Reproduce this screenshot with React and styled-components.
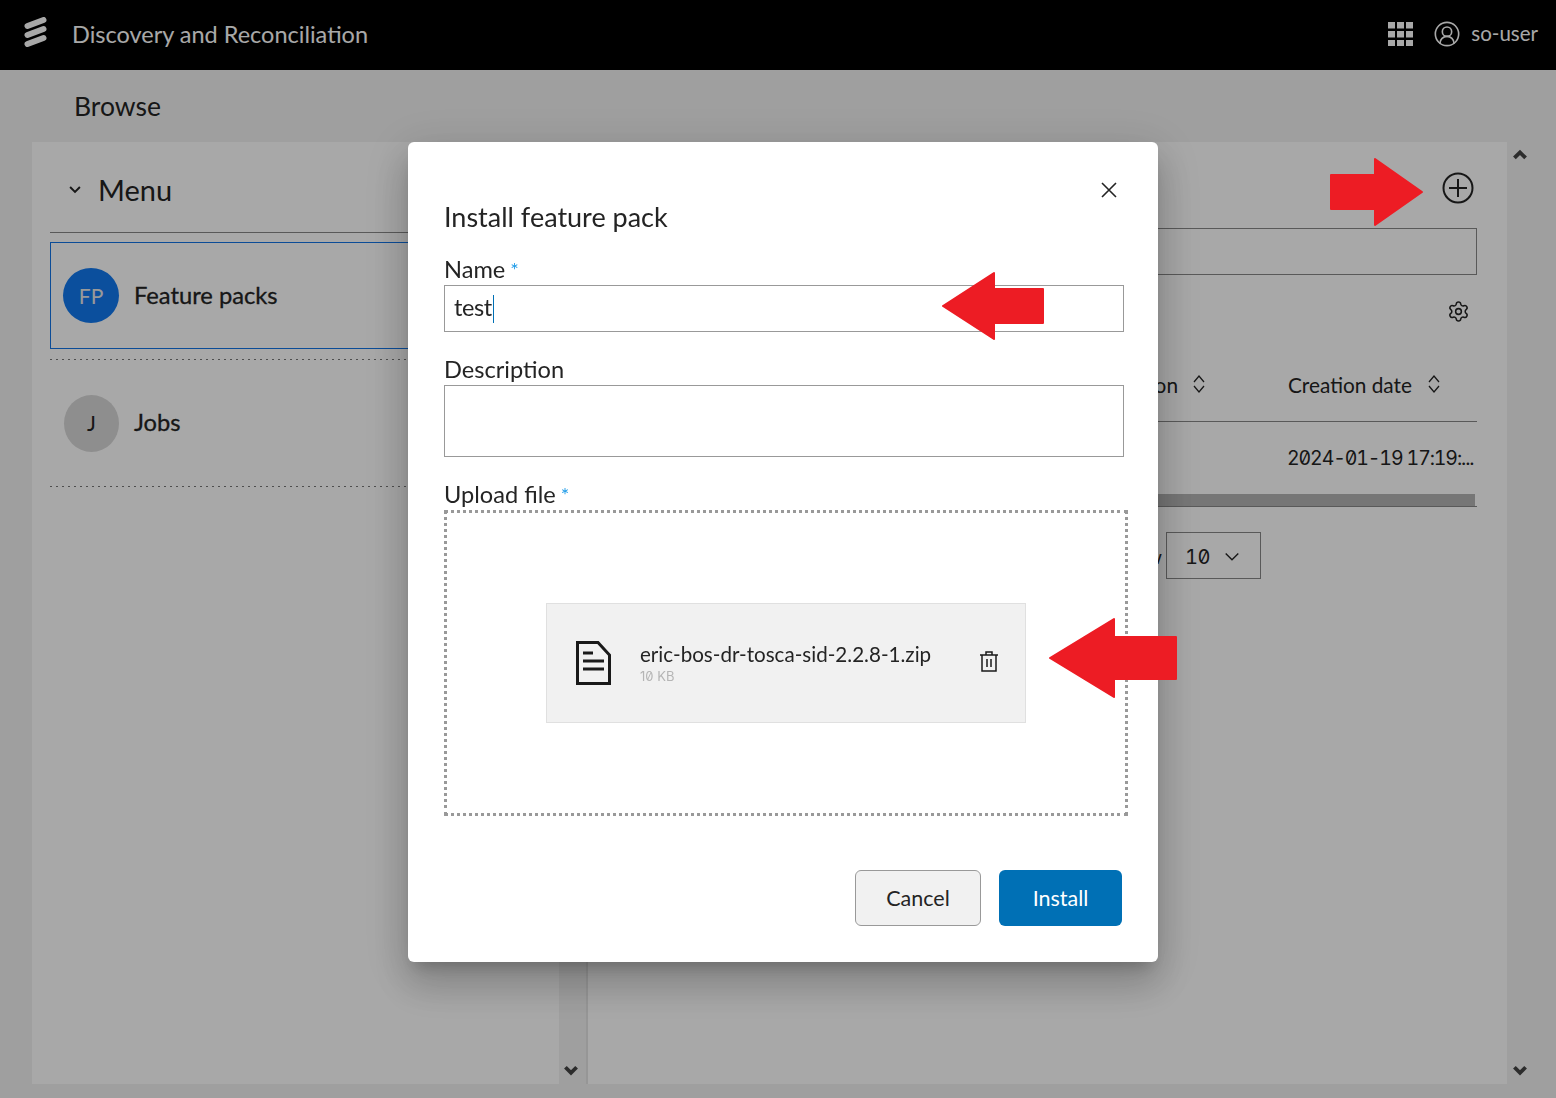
import React from 'react';
import styled, { createGlobalStyle } from 'styled-components';
import { Settings, CircleUserRound } from 'lucide-react';

const GlobalStyle = createGlobalStyle`
	html, body {
		margin: 0;
		height: 100%;
		overflow: hidden;
	}
	body {
		background: #f2f2f2;
		color: #242424;
		font-family: Lato, "Open Sans", sans-serif;
	}
	* {
		box-sizing: border-box;
	}
`;

const Page = styled.div`
	display: flex;
	flex-direction: column;
	height: 1098px;
`;

const TopBar = styled.header`
	display: flex;
	align-items: center;
	height: 70px;
	padding: 0 18px 3px 24px;
	background: #000;
	color: #fff;
	flex-shrink: 0;
`;

const LogoSvg = styled.svg`
	width: 23px;
	height: 30px;
	margin: 0 25px 3px 0;
`;

const AppName = styled.div`
	font-size: 23.5px;
	flex: 1;
`;

const UserName = styled.div`
	font-size: 20.5px;
	margin: 0 0 2px 10px;
`;

const GridSvg = styled.svg`
	width: 25px;
	height: 24px;
	margin-right: 20px;
`;

const PageTitle = styled.div`
	height: 72px;
	padding-left: 74px;
	display: flex;
	align-items: center;
	font-size: 26.5px;
	flex-shrink: 0;
`;

const Workspace = styled.div`
	flex: 1;
	display: flex;
	margin: 0 23px 14px 32px;
	min-height: 0;
`;

const SidePanel = styled.aside`
	width: 527px;
	background: #fff;
	padding: 0 18px;
`;

const MenuHead = styled.div`
	display: flex;
	align-items: center;
	gap: 16px;
	height: 91px;
	padding: 5px 0 0 18px;
	border-bottom: 1px solid #888;
	font-size: 29px;
`;

const MenuItem = styled.div`
	display: flex;
	align-items: center;
	gap: 15px;
	padding-left: ${(props) => (props.$selected ? '12px' : '14px')};
	height: ${(props) => (props.$selected ? '107px' : '126px')};
	margin-top: ${(props) => (props.$selected ? '9px' : '0')};
	border: ${(props) => (props.$selected ? '1px solid #1174e6' : 'none')};
	font-size: 23.7px;
	line-height: 26px;
	-webkit-text-stroke: 0.3px #242424;
`;

const ItemLabel = styled.span`
	margin-bottom: 2px;
`;

const Dots = styled.div`
	height: 1px;
	background-image: repeating-linear-gradient(to right, #777 0 2px, transparent 2px 6px);
	margin-top: ${(props) => props.$gap || 0}px;
`;

const Avatar = styled.div`
	width: ${(props) => (props.$selected ? '56px' : '55px')};
	height: ${(props) => (props.$selected ? '55px' : '57px')};
	border-radius: 50%;
	display: flex;
	align-items: center;
	justify-content: center;
	font-size: 21px;
	-webkit-text-stroke: 0;
	background: ${(props) => (props.$selected ? '#1279ef' : '#d8d8d8')};
	color: ${(props) => (props.$selected ? '#e8e8e8' : '#242424')};
`;

const ScrollTrack = styled.div`
	width: ${(props) => props.$w}px;
	display: flex;
	flex-direction: column;
	justify-content: space-between;
	align-items: center;
	padding: 7px ${(props) => props.$nudge || 0}px 8px 0;
	flex-shrink: 0;
`;

const Divider = styled.div`
	width: 2px;
	background: #e4e4e4;
	flex-shrink: 0;
`;

const MainPanel = styled.main`
	flex: 1;
	background: #fff;
	padding: 0 30px 0 40px;
`;

const Toolbar = styled.div`
	height: 86px;
	display: flex;
	justify-content: flex-end;
	align-items: flex-start;
	padding: 30px 3px 0 0;
`;

const SearchBox = styled.div`
	height: 47px;
	border: 1px solid #888;
`;

const GearRow = styled.div`
	height: 72px;
	display: flex;
	justify-content: flex-end;
	align-items: center;
	padding: 0 7px 0 0;
	color: #242424;
`;

const TableRow = styled.div`
	display: grid;
	grid-template-columns: 1fr 189px;
	align-items: center;
	height: ${(props) => (props.$head ? '75px' : '72px')};
	border-bottom: ${(props) => (props.$head ? '1px solid #888' : 'none')};
	font-size: 20.8px;
`;

const HeadCell = styled.div`
	display: flex;
	align-items: center;
	justify-content: ${(props) => (props.$end ? 'flex-end' : 'flex-start')};
	gap: ${(props) => (props.$end ? '14px' : '15px')};
	padding-right: ${(props) => (props.$end ? '82px' : '0')};
	white-space: nowrap;
`;

const DateCell = styled.div`
	margin-left: -1px;
	font-family: Inter, sans-serif;
	font-feature-settings: 'zero', 'tnum';
	font-size: 19.5px;
	letter-spacing: -1.1px;
	white-space: nowrap;
`;

const HScroll = styled.div`
	height: 13px;
	border-bottom: 1px solid #888;
	background: linear-gradient(to right, #b4b4b4 calc(100% - 2px), transparent calc(100% - 2px));
`;

const Pager = styled.div`
	display: flex;
	justify-content: flex-end;
	align-items: center;
	gap: 4px;
	margin: 25px 216px 0 0;
	font-size: 20px;
`;

const SizeSelect = styled.div`
	width: 95px;
	height: 47px;
	border: 1px solid #888;
	display: flex;
	align-items: center;
	gap: 13px;
	padding: 3px 0 0 18px;
	font-family: Inter, sans-serif;
	font-feature-settings: 'zero', 'tnum';
	font-size: 20px;
	letter-spacing: -0.5px;
`;

const Mask = styled.div`
	position: fixed;
	inset: 0;
	background: rgba(0, 0, 0, 0.34);
	padding: 142px 0 0 408px;
`;

const Modal = styled.div`
	position: relative;
	width: 750px;
	height: 820px;
	background: #fff;
	border-radius: 6px;
	padding: 60px 34px 0 36px;
	color: #242424;
	box-shadow: 0 24px 38px 3px rgba(0, 0, 0, 0.14), 0 9px 46px 8px rgba(0, 0, 0, 0.12), 0 11px 15px -7px rgba(0, 0, 0, 0.2);
`;

const CloseSvg = styled.svg`
	position: absolute;
	top: 40px;
	right: 41px;
	width: 16px;
	height: 16px;
`;

const ModalTitle = styled.div`
	font-size: 27px;
	line-height: 30px;
	margin-bottom: 23px;
`;

const Label = styled.div`
	font-size: 23.6px;
	line-height: 28px;
	margin-top: ${(props) => props.$top || 0}px;
	height: 30px;
`;

const Star = styled.span`
	color: #1e9be8;
	font-size: 20px;
	margin-left: 5px;
	vertical-align: 1px;
`;

const TextBox = styled.div`
	height: ${(props) => props.$h}px;
	border: 1px solid #999;
	padding: 0 0 3px 9px;
	display: flex;
	align-items: center;
	font-size: 23.5px;
	letter-spacing: -0.4px;
`;

const Caret = styled.span`
	width: 1px;
	height: 28px;
	margin: 3px 0 0 1px;
	background: #0070b5;
`;

const DropZone = styled.div`
	width: 684px;
	height: 306px;
	border: 3px dotted #999;
	display: flex;
	align-items: center;
	justify-content: center;
`;

const FileCard = styled.div`
	width: 480px;
	height: 120px;
	background: #f1f1f1;
	border: 1px solid #e0e0e0;
	display: flex;
	align-items: center;
	padding: 0 27px 0 29px;
`;

const FileInfo = styled.div`
	flex: 1;
	margin: -2px 0 0 29px;
`;

const FileName = styled.div`
	font-size: 20.6px;
	line-height: 26px;
`;

const FileSize = styled.div`
	font-family: Inter, sans-serif;
	font-feature-settings: 'zero';
	font-size: 13px;
	line-height: 14px;
	margin-top: 2px;
	color: #b5b5b5;
`;

const TrashSvg = styled.svg`
	margin-bottom: 4px;
`;

const Actions = styled.div`
	display: flex;
	justify-content: flex-end;
	gap: 18px;
	margin: 54px 2px 0 0;
`;

const Button = styled.button`
	height: 56px;
	width: ${(props) => (props.$primary ? '123px' : '126px')};
	border-radius: 6px;
	font-family: inherit;
	font-size: 21.5px;
	border: ${(props) => (props.$primary ? 'none' : '1px solid #999')};
	background: ${(props) => (props.$primary ? '#0070b5' : '#f1f1f1')};
	color: ${(props) => (props.$primary ? '#fff' : '#242424')};
`;

const ArrowSvg = styled.svg`
	position: absolute;
	left: ${(props) => props.$x}px;
	top: ${(props) => props.$y}px;
	fill: #ed1c24;
	stroke: #ed1c24;
	stroke-width: 2;
	stroke-linejoin: round;
`;

const Chevron = ({ up, size = 16, weight = 3.4, color = '#444' }) => (
	<svg width={size} height={size * 0.7} viewBox="0 0 14 10" fill="none" stroke={color} strokeWidth={weight}>
		<path d={up ? 'M2 8 L7 3 L12 8' : 'M2 2 L7 7 L12 2'} />
	</svg>
);

const SortIcon = () => (
	<svg width="14" height="20" viewBox="0 0 14 20" fill="none" stroke="#242424" strokeWidth="1.3">
		<path d="M2 8 L7 2 L12 8" />
		<path d="M2 12 L7 18 L12 12" />
	</svg>
);

const App = () => {
	return (
		<>
			<GlobalStyle />
			<Page>
				<TopBar>
					<LogoSvg viewBox="0 0 23 30" fill="none" stroke="#fff" strokeWidth="6" strokeLinecap="round">
						<path d="M3.5 9 L19.5 3 M3.5 18 L19.5 12 M3.5 27 L19.5 21" />
					</LogoSvg>
					<AppName>Discovery and Reconciliation</AppName>
					<GridSvg viewBox="0 0 25 24" fill="#fff">
						{[0, 9, 18].map((y) =>
							[0, 9, 18].map((x) => <rect key={`${x}-${y}`} x={x} y={y} width="7" height="6.5" />)
						)}
					</GridSvg>
					<CircleUserRound size={28} strokeWidth={1.4} color="#fff" />
					<UserName>so-user</UserName>
				</TopBar>
				<PageTitle>Browse</PageTitle>
				<Workspace>
					<SidePanel>
						<MenuHead>
							<Chevron size={14} weight={2} color="#242424" />
							Menu
						</MenuHead>
						<MenuItem $selected>
							<Avatar $selected>FP</Avatar>
							<ItemLabel>Feature packs</ItemLabel>
						</MenuItem>
						<Dots $gap={10} />
						<MenuItem>
							<Avatar>J</Avatar>
							<ItemLabel>Jobs</ItemLabel>
						</MenuItem>
						<Dots />
					</SidePanel>
					<ScrollTrack $w={27} $nudge={3}>
						<Chevron up />
						<Chevron />
					</ScrollTrack>
					<Divider />
					<MainPanel>
						<Toolbar>
							<svg width="32" height="32" viewBox="0 0 32 32" fill="none" stroke="#242424" strokeWidth="2">
								<circle cx="16" cy="16" r="14.5" />
								<path d="M16 7 V25 M7 16 H25" />
							</svg>
						</Toolbar>
						<SearchBox />
						<GearRow>
							<Settings size={23} strokeWidth={1.6} />
						</GearRow>
						<TableRow $head>
							<HeadCell $end>
								Description
								<SortIcon />
							</HeadCell>
							<HeadCell>
								Creation date
								<SortIcon />
							</HeadCell>
						</TableRow>
						<TableRow>
							<div />
							<DateCell>2024-01-19 17:19:...</DateCell>
						</TableRow>
						<HScroll />
						<Pager>
							Show
							<SizeSelect>
								10
								<Chevron size={18} weight={1.1} color="#242424" />
							</SizeSelect>
						</Pager>
					</MainPanel>
					<ScrollTrack $w={26}>
						<Chevron up />
						<Chevron />
					</ScrollTrack>
				</Workspace>
			</Page>
			<Mask>
				<Modal>
					<CloseSvg viewBox="0 0 16 16" fill="none" stroke="#242424" strokeWidth="1.6">
						<path d="M1 1 L15 15 M15 1 L1 15" />
					</CloseSvg>
					<ModalTitle>Install feature pack</ModalTitle>
					<Label>
						Name<Star>*</Star>
					</Label>
					<TextBox $h={47}>
						test
						<Caret />
					</TextBox>
					<Label $top={23}>Description</Label>
					<TextBox $h={72} />
					<Label $top={23}>
						Upload file<Star>*</Star>
					</Label>
					<DropZone>
						<FileCard>
							<svg width="35" height="44" viewBox="0 0 35 44" fill="none" stroke="#1a1a1a" strokeWidth="3">
								<path d="M1.5 1.5 H22 L33.5 14 V42.5 H1.5Z" />
								<path d="M7 12 H17 M7 20 H28 M7 28 H28" />
							</svg>
							<FileInfo>
								<FileName>eric-bos-dr-tosca-sid-2.2.8-1.zip</FileName>
								<FileSize>10 KB</FileSize>
							</FileInfo>
							<TrashSvg width="18" height="21" viewBox="0 0 18 21" fill="none" stroke="#1a1a1a" strokeWidth="1.5">
								<path d="M0 4 H18 M6 4 V1 H12 V4 M2 4 V20 H16 V4 M7 8 V16 M11 8 V16" />
							</TrashSvg>
						</FileCard>
					</DropZone>
					<Actions>
						<Button>Cancel</Button>
						<Button $primary>Install</Button>
					</Actions>
				</Modal>
				<ArrowSvg $x={1329} $y={157} width="96" height="70" viewBox="0 0 96 70">
					<path d="M2 18 H46 V2 L93 35 L46 68 V52 H2Z" />
				</ArrowSvg>
				<ArrowSvg $x={941} $y={271} width="104" height="70" viewBox="0 0 104 70">
					<path d="M102 18 H53 V2 L2 35 L53 68 V52 H102Z" />
				</ArrowSvg>
				<ArrowSvg $x={1048} $y={617} width="130" height="82" viewBox="0 0 130 82">
					<path d="M128 20 H66 V2 L2 41 L66 80 V62 H128Z" />
				</ArrowSvg>
			</Mask>
		</>
	);
};

export default App;
